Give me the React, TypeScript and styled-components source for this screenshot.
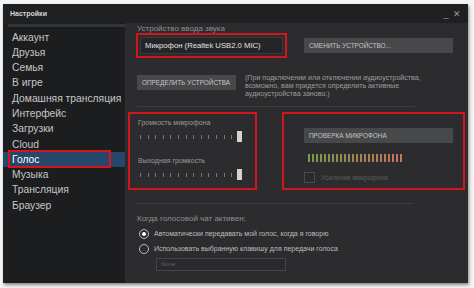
import React from "react";
import styled, { createGlobalStyle } from "styled-components";

const Global = createGlobalStyle`
  html, body { margin: 0; padding: 0; background: #f4f4f4; }
  body { font-family: "Liberation Sans", Arial, sans-serif; }
`;

const Page = styled.div`
  width: 474px;
  height: 288px;
  padding: 4px 0 0 3px;
  box-sizing: border-box;
`;

const Window = styled.div`
  width: 465px;
  height: 279px;
  background: #2c2c2e;
  display: flex;
  flex-direction: column;
  box-shadow: 1px 2px 3px rgba(0,0,0,0.45);
  overflow: hidden;
`;

const TitleBar = styled.div`
  height: 19px;
  flex: none;
  background: #1f2022;
  display: flex;
  align-items: center;
  justify-content: space-between;
  padding: 0 6px 0 7px;
`;

const Title = styled.span`
  font-size: 7px;
  font-weight: bold;
  color: #d4d4d4;
`;

const Controls = styled.span`
  font-size: 9px;
  color: #9a9a9a;
  letter-spacing: 1px;
`;

const Main = styled.div`
  flex: 1;
  display: flex;
  min-height: 0;
`;

const Sidebar = styled.div`
  width: 122px;
  flex: none;
  background: #1c1d1f;
  padding-top: 6.5px;
  position: relative;
  &::before {
    content: "";
    position: absolute;
    top: 1px;
    left: 5px;
    right: 0;
    height: 3px;
    background: #343537;
  }
`;

const NavItem = styled.div<{ $active?: boolean }>`
  position: relative;
  height: 15.3px;
  line-height: 15.3px;
  padding-left: 9px;
  font-size: 10.3px;
  color: ${(p) => (p.$active ? "#ffffff" : "#c6c6c6")};
  background: ${(p) => (p.$active ? "#26466a" : "transparent")};
  white-space: nowrap;
`;

const Marker = styled.span<{ $l: number; $t: number; $w: number; $h: number }>`
  position: absolute;
  left: ${(p) => p.$l}px;
  top: ${(p) => p.$t}px;
  width: ${(p) => p.$w}px;
  height: ${(p) => p.$h}px;
  border: 2px solid #d3161c;
  box-sizing: border-box;
  pointer-events: none;
`;

const Content = styled.div`
  flex: 1;
  padding: 1px 0 0 12px;
  display: flex;
  flex-direction: column;
`;

const SmallLabel = styled.div`
  font-size: 8px;
  color: #8e8e8e;
  height: 9px;
  line-height: 9px;
  white-space: nowrap;
`;

const SliderLabel = styled.div`
  font-size: 7px;
  color: #9a9a9a;
  height: 10px;
  line-height: 10px;
  white-space: nowrap;
`;

const Row = styled.div`
  display: flex;
  align-items: center;
`;

const DeviceFrame = styled.div`
  width: 151px;
  height: 25px;
  margin-left: -1px;
  border: 2px solid #d3161c;
  box-sizing: border-box;
  padding: 2px;
  display: flex;
`;

const DeviceInput = styled.div`
  flex: 1;
  background: #252527;
  border: 1px solid #3a3a3c;
  font-size: 7.7px;
  color: #e2e2e2;
  display: flex;
  align-items: center;
  padding-left: 4px;
  white-space: nowrap;
`;

const Button = styled.div<{ $w: number; $h: number }>`
  width: ${(p) => p.$w}px;
  height: ${(p) => p.$h}px;
  background: #47484a;
  color: #c6c6c6;
  font-size: 6.4px;
  display: flex;
  align-items: center;
  padding-left: 5px;
  box-sizing: border-box;
  flex: none;
  white-space: nowrap;
`;

const Note = styled.div`
  font-size: 7.1px;
  line-height: 8px;
  color: #9c9c9c;
  margin-left: 9px;
  white-space: nowrap;
`;

const Separator = styled.div<{ $w: number }>`
  width: ${(p) => p.$w}px;
  height: 1px;
  background: #3e3e40;
`;

const BoxRow = styled.div`
  display: flex;
  margin-left: -9px;
  gap: 25px;
`;

const RedBox = styled.div<{ $w: number }>`
  width: ${(p) => p.$w}px;
  height: 78px;
  border: 2px solid #d3161c;
  box-sizing: border-box;
  display: flex;
  flex-direction: column;
`;

const SliderBlock = styled.div`
  padding: 4px 0 0 8px;
  display: flex;
  flex-direction: column;
`;

const Track = styled.div`
  position: relative;
  width: 104px;
  height: 13px;
  margin-top: 2px;
  display: flex;
  align-items: center;
  gap: 6.6px;
  padding-left: 2px;
  box-sizing: border-box;
`;

const Tick = styled.span`
  width: 1px;
  height: 4px;
  background: #7a7a7a;
  flex: none;
`;

const Thumb = styled.span`
  position: absolute;
  right: 0;
  top: 1px;
  width: 5px;
  height: 11px;
  background: #d2d2d2;
`;

const SliderGap = styled.div`
  height: 13px;
`;

const TestArea = styled.div`
  padding: 14px 0 0 20px;
  display: flex;
  flex-direction: column;
`;

const Meter = styled.div`
  display: flex;
  gap: 2px;
  margin: 11px 0 0 4px;
`;

const Bar = styled.span<{ $c: string }>`
  width: 2px;
  height: 8px;
  background: ${(p) => p.$c};
`;

const CheckRow = styled.div`
  display: flex;
  align-items: center;
  margin-top: 10px;
  gap: 6px;
`;

const Check = styled.span`
  width: 9px;
  height: 9px;
  border: 1px solid #4a4a4c;
  background: #2a2a2c;
`;

const Dim = styled.span`
  font-size: 6.7px;
  color: #5c5c5e;
  white-space: nowrap;
`;

const RadioRow = styled.div`
  display: flex;
  align-items: center;
  gap: 5px;
  height: 15px;
  padding-left: 2px;
`;

const Radio = styled.span<{ $on?: boolean }>`
  width: 8px;
  height: 8px;
  border-radius: 50%;
  border: 1px solid #bdbdbd;
  display: flex;
  align-items: center;
  justify-content: center;
  flex: none;
  &::after {
    content: "";
    width: 4px;
    height: 4px;
    border-radius: 50%;
    background: ${(p) => (p.$on ? "#ffffff" : "transparent")};
  }
`;

const RadioText = styled.span`
  font-size: 7px;
  color: #bdbdbd;
  white-space: nowrap;
`;

const KeyInput = styled.div`
  width: 130px;
  height: 13px;
  margin: 2px 0 0 19px;
  border: 1px solid #454547;
  background: #2a2a2c;
  box-sizing: border-box;
  font-size: 6px;
  color: #616163;
  padding-left: 4px;
  line-height: 11px;
`;

const nav = [
  "Аккаунт",
  "Друзья",
  "Семья",
  "В игре",
  "Домашняя трансляция",
  "Интерфейс",
  "Загрузки",
  "Cloud",
  "Голос",
  "Музыка",
  "Трансляция",
  "Браузер",
];

const meterColors = Array.from({ length: 24 }).map((_, i) => {
  const t = i / 23;
  const r = Math.round(0x7a + (0xc4 - 0x7a) * t);
  const g = Math.round(0x9a + (0x78 - 0x9a) * t);
  const b = Math.round(0x4e + (0x58 - 0x4e) * t);
  return `rgb(${r},${g},${b})`;
});

function Slider({ label }: { label: string }) {
  return (
    <>
      <SliderLabel>{label}</SliderLabel>
      <Track>
        {Array.from({ length: 13 }).map((_, i) => (
          <Tick key={i} />
        ))}
        <Thumb />
      </Track>
    </>
  );
}

export default function App() {
  return (
    <Page>
      <Global />
      <Window>
        <TitleBar>
          <Title>Настройки</Title>
          <Controls>_ ✕</Controls>
        </TitleBar>
        <Main>
          <Sidebar>
            {nav.map((n) => (
              <NavItem key={n} $active={n === "Голос"}>
                {n}
                {n === "Голос" && <Marker $l={5} $t={-2} $w={103} $h={18} />}
              </NavItem>
            ))}
          </Sidebar>
          <Content>
            <SmallLabel>Устройство ввода звука</SmallLabel>
            <Row>
              <DeviceFrame>
                <DeviceInput>Микрофон (Realtek USB2.0 MIC)</DeviceInput>
              </DeviceFrame>
              <Button $w={149} $h={15} style={{ marginLeft: 17 }}>
                СМЕНИТЬ УСТРОЙСТВО...
              </Button>
            </Row>
            <Row style={{ marginTop: 16, alignItems: "flex-start" }}>
              <Button $w={99} $h={15} style={{ marginTop: 1 }}>
                ОПРЕДЕЛИТЬ УСТРОЙСТВА
              </Button>
              <Note>
                (При подключении или отключении аудиоустройства,
                <br />
                возможно, вам придется определить активные
                <br />
                аудиоустройства заново.)
              </Note>
            </Row>
            <Separator $w={278} style={{ marginTop: 8 }} />
            <BoxRow style={{ marginTop: 5 }}>
              <RedBox $w={129}>
                <SliderBlock>
                  <Slider label="Громкость микрофона" />
                  <SliderGap />
                  <Slider label="Выходная громкость" />
                </SliderBlock>
              </RedBox>
              <RedBox $w={183}>
                <TestArea>
                  <Button $w={149} $h={15}>ПРОВЕРКА МИКРОФОНА</Button>
                  <Meter>
                    {meterColors.map((c, i) => (
                      <Bar key={i} $c={c} />
                    ))}
                  </Meter>
                  <CheckRow>
                    <Check />
                    <Dim>Усиление микрофона</Dim>
                  </CheckRow>
                </TestArea>
              </RedBox>
            </BoxRow>
            <Separator $w={275} style={{ marginTop: 13 }} />
            <SmallLabel style={{ marginTop: 10 }}>Когда голосовой чат активен:</SmallLabel>
            <RadioRow style={{ marginTop: 3 }}>
              <Radio $on />
              <RadioText>Автоматически передавать мой голос, когда я говорю</RadioText>
            </RadioRow>
            <RadioRow>
              <Radio />
              <RadioText>Использовать выбранную клавишу для передачи голоса</RadioText>
            </RadioRow>
            <KeyInput>None</KeyInput>
          </Content>
        </Main>
      </Window>
    </Page>
  );
}
